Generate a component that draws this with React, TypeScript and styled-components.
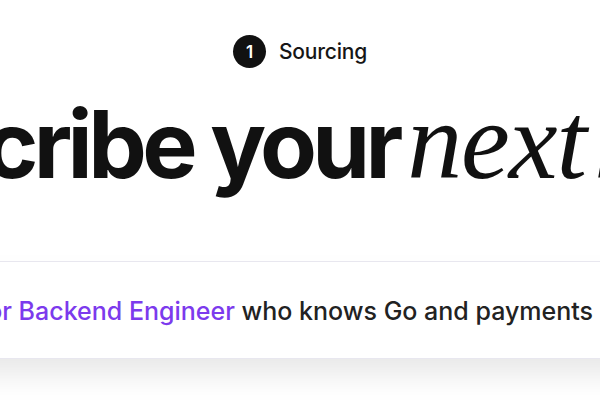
import React from 'react'
import styled, { createGlobalStyle } from 'styled-components'

/*
 * Styles
 */

const GlobalStyle = createGlobalStyle`
  html, body {
    margin: 0;
    padding: 0;
    background: #ffffff;
  }

  body {
    font-family: Inter, "Noto Sans", sans-serif;
    -webkit-font-smoothing: antialiased;
  }
`

const Stage = styled.div`
  display: flex;
  flex-direction: column;
  align-items: center;
  width: 600px;
  height: 400px;
  overflow: hidden;
  padding-top: 35px;
  box-sizing: border-box;
`

const StepRow = styled.div`
  display: flex;
  align-items: center;
  gap: 13px;
`

const StepNumber = styled.span`
  display: flex;
  align-items: center;
  justify-content: center;
  width: 33px;
  height: 33px;
  border-radius: 50%;
  background: #111111;
  color: #ffffff;
  font-size: 17px;
  font-weight: 600;
`

const StepLabel = styled.span`
  color: #161616;
  font-size: 21px;
  font-weight: 500;
  letter-spacing: -0.01em;
`

const Headline = styled.h1`
  margin: 23px 0 0 -14px;
  white-space: nowrap;
  color: #111111;
  font-family: Inter, sans-serif;
  font-size: 93px;
  font-weight: 700;
  line-height: 100px;
  letter-spacing: -0.05em;
`

const Accent = styled.em`
  margin-left: -9px;
  font-family: "Liberation Serif", "DejaVu Serif", serif;
  font-size: 110px;
  font-style: italic;
  font-weight: 400;
  letter-spacing: -0.01em;
  word-spacing: -18px;
`

const PromptCard = styled.div`
  flex-shrink: 0;
  width: 820px;
  margin-top: 67px;
  padding: 33px 0 0 44px;
  height: 98px;
  box-sizing: border-box;
  background: #ffffff;
  border: 1px solid #e8e7ef;
  border-radius: 18px;
  box-shadow: 0 18px 32px -4px rgba(0, 0, 0, 0.1);
  white-space: nowrap;
  font-size: 25px;
  font-weight: 500;
  line-height: 32px;
  color: #222222;
`

const Role = styled.span`
  color: #7c3aed;
`

/*
 * Component
 */

export default function App() {
  return (
    <>
      <GlobalStyle />
      <Stage>
        <StepRow>
          <StepNumber>1</StepNumber>
          <StepLabel>Sourcing</StepLabel>
        </StepRow>
        <Headline>
          Describe your <Accent>next hire</Accent>
        </Headline>
        <PromptCard>
          <Role>Senior Backend Engineer</Role> who knows Go and payments at scale
        </PromptCard>
      </Stage>
    </>
  )
}
